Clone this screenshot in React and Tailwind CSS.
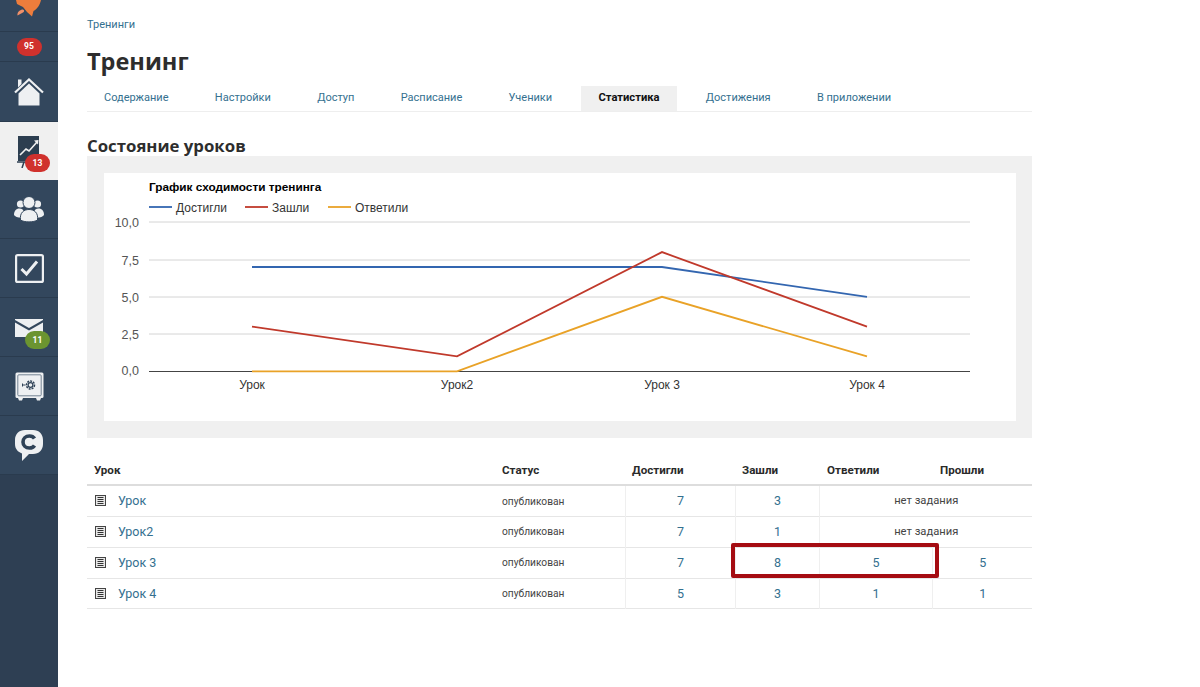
import React from "react";

const link = "text-[#34708f]";
const roboto = "font-['Roboto',sans-serif]";

function Rocket() {
  return (
    <svg width="30" height="18" viewBox="0 0 30 18" className="absolute left-[14px] top-0">
      <path d="M2 0 H27 C26 5 23 9 19.500 11 L18 16.500 L13 12 L9 7 L3 4 Z" fill="#ee7d3c" />
      <path d="M8 9.500 C10 9.500 11 11 9 12.500 L3.500 15.500 C3 12.500 5 10.500 8 9.500 Z" fill="#f0906a" />
    </svg>
  );
}

function Home() {
  return (
    <svg width="30" height="28" viewBox="0 0 30 28">
      <path d="M4 1.500 H7.500 V6 L4 9.500 Z" fill="#eef0f2" />
      <path d="M1 14.500 L15 1.500 L29 14.500" fill="none" stroke="#eef0f2" strokeWidth="2.200" />
      <path d="M4.500 15.500 L15 5.500 L25.500 15.500 V27.500 H4.500 Z" fill="#eef0f2" />
    </svg>
  );
}

function Chart() {
  return (
    <svg width="24" height="33" viewBox="0 0 24 33">
      <rect x="1" y="1" width="21" height="25" fill="#2c3e50" />
      <path d="M3 20 L9 14 L12 16 L20 7" fill="none" stroke="#f1f1f1" strokeWidth="1.600" />
      <path d="M17 5.500 L21.500 5 L21 9.500 Z" fill="#f1f1f1" />
      <path d="M0 27 H22" stroke="#2c3e50" strokeWidth="1.500" />
      <path d="M7 27 L5 33 M12 27 V32" stroke="#2c3e50" strokeWidth="1.500" />
    </svg>
  );
}

function Users() {
  return (
    <svg width="30" height="26" viewBox="0 0 30 26" fill="#eef0f2">
      <circle cx="6.500" cy="8" r="3.600" />
      <circle cx="23.500" cy="8" r="3.600" />
      <path d="M0 19 C0 15 2 12.500 5.500 12.500 C8 12.500 9 13.500 9.500 15 V21.500 C5 22 1 21 0 19 Z" />
      <path d="M30 19 C30 15 28 12.500 24.500 12.500 C22 12.500 21 13.500 20.500 15 V21.500 C25 22 29 21 30 19 Z" />
      <circle cx="15" cy="6.500" r="6" stroke="#33475d" strokeWidth="1" />
      <path d="M6.500 24 C5.500 16.500 10 13.500 15 13.500 C20 13.500 24.500 16.500 23.500 24 C20 26.500 10 26.500 6.500 24 Z" stroke="#33475d" strokeWidth="1" />
    </svg>
  );
}

function Task() {
  return (
    <svg width="29" height="29" viewBox="0 0 29 29">
      <rect x="1.100" y="1.100" width="26.800" height="26.800" rx="1.500" fill="none" stroke="#eef0f2" strokeWidth="2.200" />
      <path d="M6.500 15 L11.500 20 L22 7.500" fill="none" stroke="#eef0f2" strokeWidth="3" />
    </svg>
  );
}

function Mail() {
  return (
    <svg width="28" height="18" viewBox="0 0 28 18">
      <path d="M0 1 L14 9 L28 1 V0 H0 Z" fill="#eef0f2" />
      <path d="M0 3.500 L14 11.500 L28 3.500 V18 H0 Z" fill="#eef0f2" />
    </svg>
  );
}

function Safe() {
  return (
    <svg width="29" height="29" viewBox="0 0 29 29">
      <rect x="0.500" y="0.500" width="28" height="25.500" rx="1.500" fill="#eef0f2" />
      <rect x="2.800" y="2.800" width="23.400" height="21" rx="1" fill="none" stroke="#56687b" strokeWidth="0.800" />
      <path d="M3 26 H8 L7 28.500 H4 Z M21 26 H26 L25 28.500 H22 Z" fill="#eef0f2" />
      <circle cx="15.500" cy="13" r="4" fill="none" stroke="#2f4257" strokeWidth="1.500" strokeDasharray="2 1" />
      <circle cx="15.500" cy="13" r="2.400" fill="none" stroke="#2f4257" strokeWidth="1.200" />
      <path d="M7.500 13 H10.500 M7.500 11.500 V14.500" stroke="#2f4257" strokeWidth="1" />
    </svg>
  );
}

function C() {
  return (
    <svg width="30" height="33" viewBox="0 0 30 33">
      <path d="M11 1 H19 C25 1 29 5 29 11 V15 C29 21 25 25 19 25 H15 L8 32 V24.500 C4 23 1 20 1 15 V11 C1 5 5 1 11 1 Z" fill="#eef0f2" />
      <path d="M20.500 9.500 C19.500 7.800 17.800 7 15.500 7 C11.500 7 9 9.500 9 13 C9 16.500 11.500 19 15.500 19 C17.800 19 19.500 18.200 20.500 16.500" fill="none" stroke="#2f4257" strokeWidth="3.600" />
    </svg>
  );
}

function Doc() {
  return (
    <svg width="11" height="11" viewBox="0 0 11 11" className="shrink-0 -mt-[1px]">
      <rect x="0.500" y="0.500" width="10" height="10" fill="#e8e8e8" stroke="#444" />
      <path d="M2.500 2.500 H8.500 M2.500 4.500 H8.500 M2.500 6.500 H8.500 M2.500 8.500 H8.500" stroke="#333" strokeWidth="1" />
    </svg>
  );
}

function Badge({ n, color, pos }) {
  return (
    <span className={`flex items-center justify-center rounded-full text-white font-bold text-[8.5px] h-[18px] w-[25px] ${color} ${pos}`}>
      {n}
    </span>
  );
}

function Row({ active, h, children }) {
  return (
    <div className={`relative flex items-center justify-center border-b ${h} ${active ? "bg-[#f0f0f0] border-[#f0f0f0]" : "bg-[#33475d] border-[#2a3b4e]"}`}>
      {children}
    </div>
  );
}

function Sidebar() {
  return (
    <aside className={`w-[58px] shrink-0 min-h-[687px] bg-[#2e3f53] ${roboto}`}>
      <Row h="h-[32px]"><Rocket /></Row>
      <Row h="h-[30px]"><Badge n="95" color="bg-[#d0312d]" /></Row>
      <Row h="h-[60px]"><Home /></Row>
      <Row active h="h-[58px]">
        <span className="mt-[2px]"><Chart /></span>
        <Badge n="13" color="bg-[#d0312d]" pos="absolute left-[25px] top-[32px]" />
      </Row>
      <Row h="h-[59px]"><Users /></Row>
      <Row h="h-[59px]"><Task /></Row>
      <Row h="h-[59px]">
        <span className="mt-[1px]"><Mail /></span>
        <Badge n="11" color="bg-[#6b9430]" pos="absolute left-[25px] top-[33px]" />
      </Row>
      <Row h="h-[59px]"><Safe /></Row>
      <Row h="h-[59px]"><C /></Row>
    </aside>
  );
}

const tabs = ["Содержание", "Настройки", "Доступ", "Расписание", "Ученики", "Статистика", "Достижения", "В приложении"];

function Tabs() {
  return (
    <nav className={`flex h-[26px] border-b border-[#eeeeee] mt-[9px] ${roboto}`}>
      {tabs.map((t) => (
        <span
          key={t}
          className={
            t === "Статистика"
              ? "h-[25px] px-[17px] mr-[12.300px] flex items-center bg-[#f0f0f0] font-bold text-[#111] text-[11.2px]"
              : `h-[25px] px-[17px] mr-[12.300px] flex items-center text-[11px] ${link}`
          }
        >
          {t}
        </span>
      ))}
    </nav>
  );
}

function LineChart() {
  const xs = [252, 457, 662, 867];
  const pts = (vals) => vals.map((v, i) => `${xs[i]},${371.3 - v * 14.9}`).join(" ");
  const ticks = [
    ["10,0", 222],
    ["7,5", 260],
    ["5,0", 297],
    ["2,5", 334],
  ];
  return (
    <svg width="912" height="248" viewBox="104 173 912 248" className="block font-['Liberation_Sans',Arial,sans-serif]">
      {ticks.map(([l, y]) => (
        <g key={l}>
          <line x1="149" x2="970" y1={y} y2={y} stroke="#d4d4d4" strokeWidth="1" />
          <text x="139" y={y + 4.5} textAnchor="end" fontSize="12.5" fill="#555">{l}</text>
        </g>
      ))}
      <line x1="149" x2="970" y1="371.500" y2="371.500" stroke="#444" strokeWidth="1" />
      <text x="139" y="375" textAnchor="end" fontSize="12.5" fill="#555">0,0</text>
      {["Урок", "Урок2", "Урок 3", "Урок 4"].map((l, i) => (
        <text key={l} x={xs[i]} y="389" textAnchor="middle" fontSize="12" fill="#333">{l}</text>
      ))}
      <text x="149" y="191" fontSize="11.800" fontWeight="700" fill="#000">График сходимости тренинга</text>
      <line x1="149" x2="172" y1="207" y2="207" stroke="#3366b0" strokeWidth="1.800" />
      <text x="176" y="212" fontSize="12" fill="#333">Достигли</text>
      <line x1="245" x2="268" y1="207" y2="207" stroke="#c0392b" strokeWidth="1.800" />
      <text x="272" y="212" fontSize="12" fill="#333">Зашли</text>
      <line x1="328" x2="351" y1="207" y2="207" stroke="#e9a227" strokeWidth="1.800" />
      <text x="355" y="212" fontSize="12" fill="#333">Ответили</text>
      <polyline points={pts([7, 7, 7, 5])} fill="none" stroke="#3366b0" strokeWidth="1.800" />
      <polyline points={pts([3, 1, 8, 3])} fill="none" stroke="#c0392b" strokeWidth="1.800" />
      <polyline points={pts([0, 0, 5, 1])} fill="none" stroke="#e9a227" strokeWidth="1.800" />
    </svg>
  );
}

const rows = [
  ["Урок", 7, 3, null, null],
  ["Урок2", 7, 1, null, null],
  ["Урок 3", 7, 8, 5, 5],
  ["Урок 4", 5, 3, 1, 1],
];

function Table() {
  const cell = `border-l border-[#efefef] text-center text-[12.5px] pl-[1px] ${link}`;
  const head = "text-left pl-[7px] font-bold";
  const headWide = "text-left pl-[8px] font-bold";
  return (
    <div className={`relative mt-[20px] ${roboto}`}>
      <table className="w-[945px] table-fixed border-collapse">
        <colgroup>
          <col className="w-[408px]" />
          <col className="w-[130px]" />
          <col className="w-[110px]" />
          <col className="w-[84px]" />
          <col className="w-[113px]" />
          <col className="w-[100px]" />
        </colgroup>
        <thead>
          <tr className="h-[27px] border-b-2 border-[#dddddd] text-[11.6px] text-[#2a2a2a]">
            <th className={head}>Урок</th>
            <th className={head}>Статус</th>
            <th className={head}>Достигли</th>
            <th className={head}>Зашли</th>
            <th className={headWide}>Ответили</th>
            <th className={headWide}>Прошли</th>
          </tr>
        </thead>
        <tbody>
          {rows.map((r, i) => (
            <tr key={r[0]} className={`border-b border-[#e6e6e6] ${i === 3 ? "h-[30px] [&>td]:pt-[2px]" : "h-[31px] [&>td]:pt-[1px]"}`}>
              <td className="pl-[8px]">
                <div className="flex items-center gap-[12px]">
                  <Doc />
                  <span className={`text-[12.5px] ${link}`}>{r[0]}</span>
                </div>
              </td>
              <td className="pl-[7px] text-[10.2px] text-[#444]">опубликован</td>
              <td className={cell}>{r[1]}</td>
              <td className={cell}>{r[2]}</td>
              {r[3] === null ? (
                <td colSpan={2} className="border-l border-[#efefef] text-center text-[11.2px] text-[#444] pl-[1px]">
                  нет задания
                </td>
              ) : (
                <>
                  <td className={cell}>{r[3]}</td>
                  <td className={cell}>{r[4]}</td>
                </>
              )}
            </tr>
          ))}
        </tbody>
      </table>
      <div className="absolute left-[644px] top-[85px] w-[208px] h-[35px] border-[4px] border-[#a50c12] rounded-[2px] pointer-events-none" />
    </div>
  );
}

export default function App() {
  return (
    <div className="flex min-h-[687px] bg-white font-['Open_Sans',sans-serif]">
      <Sidebar />
      <main className="ml-[29px] w-[945px]">
        <div className={`pt-[17px] text-[11px] leading-[15px] ${link} ${roboto}`}>Тренинги</div>
        <h1 className="mt-[13px] text-[23.5px] leading-[32px] font-bold text-[#2d2d2d]">Тренинг</h1>
        <Tabs />
        <h2 className="mt-[23px] text-[16.8px] leading-[21px] font-bold text-[#2d2d2d]">Состояние уроков</h2>
        <section className="bg-[#f0f0f0] py-[17px] pl-[17px] pr-[16px]">
          <div className="bg-white">
            <LineChart />
          </div>
        </section>
        <Table />
      </main>
    </div>
  );
}
